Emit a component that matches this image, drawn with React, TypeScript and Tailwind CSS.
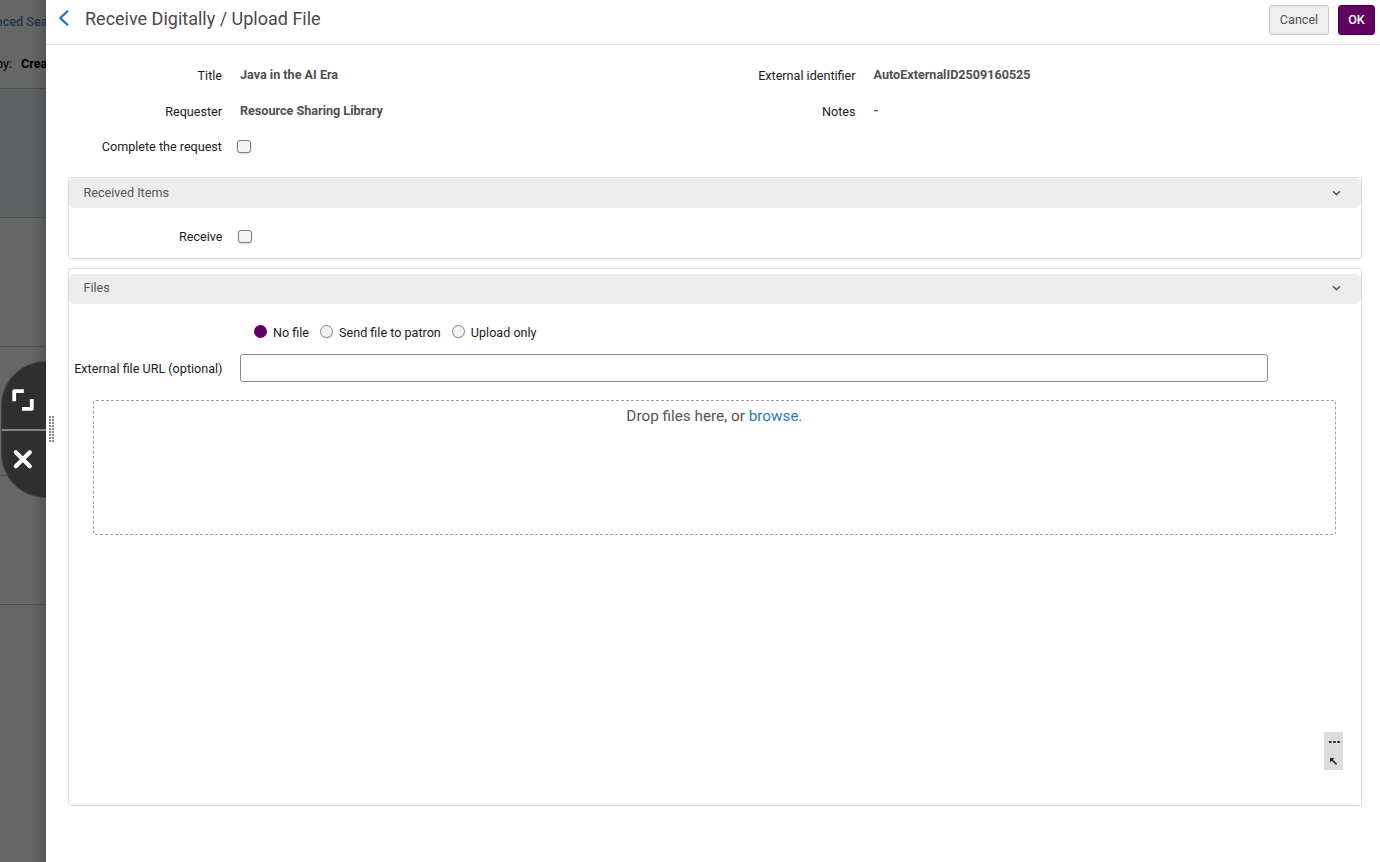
import type { ReactNode } from "react";

interface FieldProps {
  label: string;
  children: ReactNode;
}

function Field({ label, children }: FieldProps) {
  return (
    <div className="flex h-9 flex-1 items-center">
      <span className="w-[176px] shrink-0 pt-0.5 text-right text-[#1c1c1c]">{label}</span>
      <span className="pl-[18px] font-bold text-[#505050]">{children}</span>
    </div>
  );
}

function Checkbox() {
  return (
    <span className="block h-[13px] w-[14px] shrink-0 rounded-[3px] border border-[#7c7c7c] bg-[#f4f4f4] shadow-[0_1px_2px_rgba(0,0,0,0.15)]" />
  );
}

function Radio({ label, checked }: { label: string; checked?: boolean }) {
  return (
    <label className="flex items-center">
      <span
        className={
          checked
            ? "mr-1.5 mb-0.5 block h-[13px] w-[13px] rounded-full bg-[#600060]"
            : "mr-1.5 mb-0.5 block h-[13px] w-[13px] rounded-full border border-[#8a8a8a] bg-[#f3f3f3] shadow-[0_1px_2px_rgba(0,0,0,0.15)]"
        }
      />
      <span className="pt-px">{label}</span>
    </label>
  );
}

function SectionHeader({ title, compact }: { title: string; compact?: boolean }) {
  return (
    <div className="flex h-[30px] shrink-0 items-start justify-between rounded-[5px] bg-[#ededed] pr-5 pl-[14.5px] text-[#555]">
      <span className={compact ? "pt-[5px]" : "pt-1.5"}>{title}</span>
      <svg
        width="9"
        height="6"
        viewBox="0 0 9 6"
        fill="none"
        stroke="#555"
        strokeWidth="1.5"
        className={compact ? "mt-[11px]" : "mt-3"}
      >
        <path d="M1 1.2 4.5 4.6 8 1.2" />
      </svg>
    </div>
  );
}

function Backdrop() {
  return (
    <div className="relative flex w-[46px] shrink-0 flex-col overflow-hidden bg-[#666] whitespace-nowrap">
      <div className="h-[89px] shrink-0 border-b border-[#505050]">
        <div className="flex h-[44px] items-center justify-end font-medium text-[#27364f]">
          <span className="-mr-[1.5px]">nced Sea</span>
        </div>
        <div className="flex h-[40px] items-center text-black">
          <span className="-ml-[4px]">by:</span>
          <b className="ml-[9px] font-bold">Crea</b>
        </div>
      </div>
      <div className="h-[129px] shrink-0 border-b border-[#505050] bg-[#5d6364]" />
      <div className="h-[129px] shrink-0 border-b border-[#505050]" />
      <div className="h-[129px] shrink-0 border-b border-[#505050]" />
      <div className="h-[129px] shrink-0 border-b border-[#505050]" />
      <div className="absolute inset-y-0 right-0 w-4 bg-linear-to-r from-transparent to-black/15" />

      {/* Expand and close handles of the sliding panel */}
      <div className="absolute top-[361px] left-px flex h-[137px] w-[45px] flex-col overflow-hidden rounded-l-[45px] border border-r-0 border-[#414141] bg-[#2f2f2f]">
        <button className="flex h-[67px] shrink-0 items-center pt-[9px] pl-[9px]">
          <svg width="24" height="24" viewBox="0 0 24 24" fill="none" stroke="white" strokeWidth="3.8" strokeLinejoin="round">
            <path d="M12.8 3.2H3.2V13.2M11 20.8H20.8V11" />
          </svg>
        </button>
        <div className="-ml-px h-0.5 shrink-0 bg-[#858585]" />
        <button className="flex flex-1 items-start pt-[17px] pl-[10px]">
          <svg width="22" height="22" viewBox="0 0 22 22" fill="none" stroke="white" strokeWidth="4.2" strokeLinecap="round">
            <path d="M3.8 4.2 17.8 18.2M17.8 4.2 3.8 18.2" />
          </svg>
        </button>
      </div>
    </div>
  );
}

export default function App() {
  return (
    <div className="relative flex h-[862px] w-[1380px] overflow-hidden bg-white font-['Roboto',sans-serif] text-[12.6px] leading-[18px] text-[#1c1c1c]">
      <Backdrop />

      <main className="flex min-w-0 flex-1 flex-col">
        <header className="flex h-[45px] shrink-0 items-center border-b border-[#e0e0e0] pr-[5px] pb-[5px] pl-3">
          <svg width="12" height="18" viewBox="0 0 12 18" fill="none" stroke="#1679b5" strokeWidth="2.2" className="mb-[3px]">
            <path d="M10 1.7 2.3 9 10 16.3" />
          </svg>
          <h1 className="mb-0.5 ml-[15px] flex-1 text-lg font-normal text-[#4a4a4a]">Receive Digitally / Upload File</h1>
          <button className="h-[30px] w-[60px] rounded-[3px] border border-[#c8c8c8] bg-[#eee] text-[#555]">Cancel</button>
          <button className="ml-[9px] h-[30px] w-[37px] rounded-[3px] border border-[#480048] bg-[#600060] font-medium text-white">OK</button>
        </header>

        <div className="flex flex-1 flex-col pt-3 pr-[18px] pl-[22px]">
          <div className="-ml-[22px] flex">
            <div className="w-[633.5px]">
              <Field label="Title">Java in the AI Era</Field>
              <Field label="Requester">Resource Sharing Library</Field>
            </div>
            <div className="flex-1">
              <Field label="External identifier">AutoExternalID2509160525</Field>
              <Field label="Notes">-</Field>
            </div>
          </div>
          <div className="flex h-9 items-center pb-0.5">
            <span className="w-[154px] pt-px text-right">Complete the request</span>
            <span className="ml-[15px]">
              <Checkbox />
            </span>
          </div>

          <section className="mt-3 h-[82px] rounded-[3px] border border-[#dcdcdc]">
            <SectionHeader title="Received Items" />
            <div className="flex h-[57px] items-center">
              <span className="w-[153.5px] text-right">Receive</span>
              <span className="ml-[15.5px]">
                <Checkbox />
              </span>
            </div>
          </section>

          <section className="mt-[9px] flex h-[538px] flex-col rounded-[3px] border border-[#dcdcdc] pt-[5px]">
            <SectionHeader title="Files" compact />
            <div className="mt-[19px] ml-[185px] flex h-[18px] gap-[11px]">
              <Radio label="No file" checked />
              <Radio label="Send file to patron" />
              <Radio label="Upload only" />
            </div>
            <div className="mt-[13px] flex items-center">
              <label className="w-[153.5px] shrink-0 pt-0.5 text-right whitespace-nowrap">External file URL (optional)</label>
              <input className="ml-[17.5px] h-7 w-[1028px] rounded-[3px] border border-[#8a8a8a] bg-white px-2 outline-none" />
            </div>
            <div className="mt-[18px] mr-[25px] ml-6 h-[135px] shrink-0 rounded-[3px] border border-dashed border-[#a0a0a0] pt-1.5 text-center text-[15.3px] text-[#555]">
              Drop files here, or <a className="text-[#337ab7]">browse.</a>
            </div>
          </section>
        </div>
      </main>

      {/* Resize grip */}
      <svg className="absolute top-[416px] left-[49px]" width="6" height="27" viewBox="0 0 6 27">
        {[0, 3, 6, 9, 12, 15, 18, 21, 24].map((y) => (
          <path key={y} d={`M0 ${y}h2v2h-2zM3 ${y}h2v2h-2z`} fill="#868686" />
        ))}
      </svg>

      {/* Floating shortcut box */}
      <div className="absolute top-[732px] left-[1324px] flex h-[38px] w-[19px] flex-col items-center bg-[#dcdcdc]">
        <svg width="19" height="38" viewBox="0 0 19 38" fill="none" stroke="#222">
          <path d="M5 10h2.5M9.2 10h2.5M13.3 10h2.5" strokeWidth="2" />
          <path d="M7 27 12.6 32.4" strokeWidth="1.5" />
          <path d="M6 26h4.6L6 30.6z" fill="#222" stroke="none" />
        </svg>
      </div>
    </div>
  );
}
